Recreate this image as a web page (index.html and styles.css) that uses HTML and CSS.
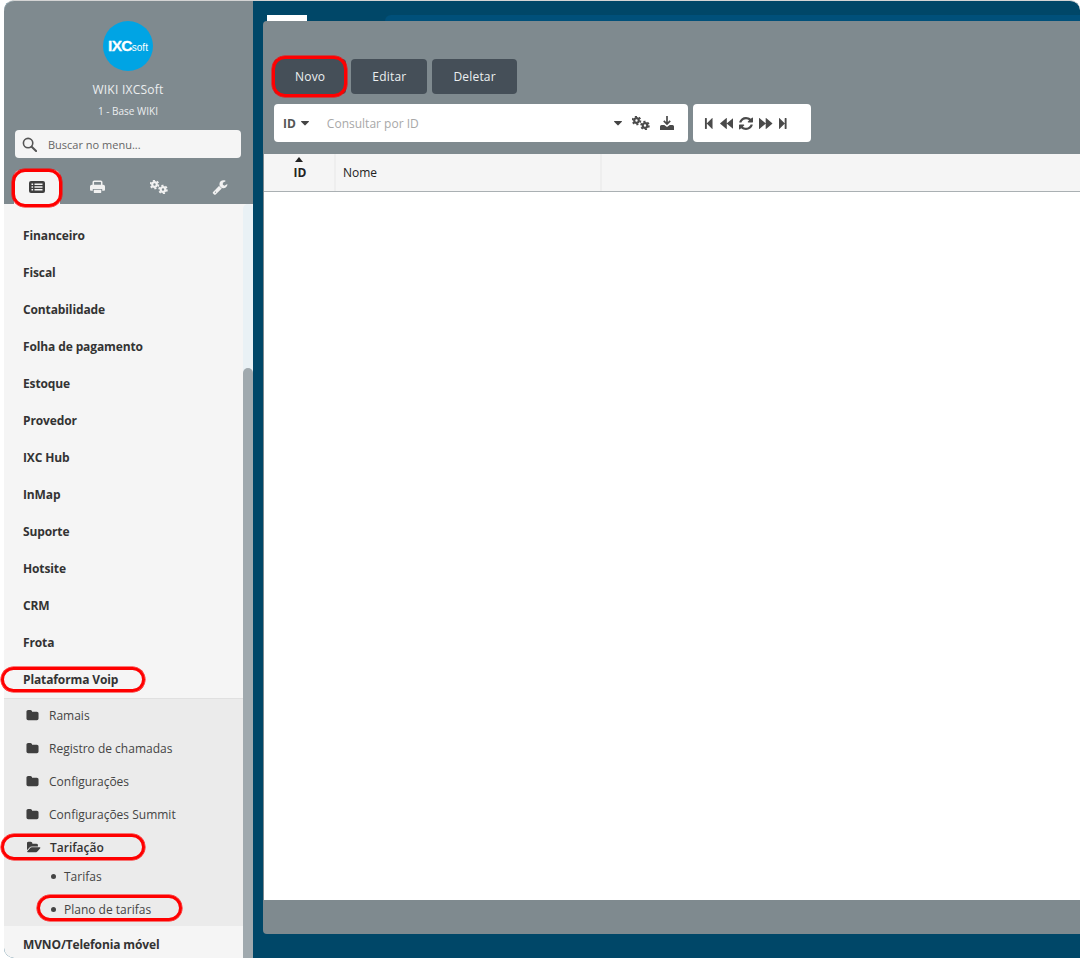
FILE: index.html
```html
<!DOCTYPE html>
<html lang="pt-BR">
<head>
<meta charset="utf-8">
<title>WIKI IXCSoft</title>
<link rel="stylesheet" href="styles.css">
</head>
<body>
<svg class="sprite" aria-hidden="true">
  <symbol id="i-folder" viewBox="0 0 1792 1792"><path d="M1728 608v704q0 92-66 158t-158 66h-1216q-92 0-158-66t-66-158v-960q0-92 66-158t158-66h320q92 0 158 66t66 158v32h672q92 0 158 66t66 158z"/></symbol>
  <symbol id="i-caret" viewBox="0 0 1792 1792"><path d="M1408 704q0 26-19 45l-448 448q-19 19-45 19t-45-19l-448-448q-19-19-19-45t19-45 45-19h896q26 0 45 19t19 45z"/></symbol>
  <symbol id="i-gears" viewBox="0 0 18 14">
    <circle cx="4.500" cy="4.500" r="2.300" fill="none" stroke="currentColor" stroke-width="2.200"/>
    <circle cx="4.500" cy="4.500" r="3.900" fill="none" stroke="currentColor" stroke-width="1.800" stroke-dasharray="2.100 1.980"/>
    <circle cx="13" cy="9.500" r="2.300" fill="none" stroke="currentColor" stroke-width="2.200"/>
    <circle cx="13" cy="9.500" r="3.900" fill="none" stroke="currentColor" stroke-width="1.800" stroke-dasharray="2.100 1.980"/>
  </symbol>
</svg>
<div class="app">
  <aside class="sidebar">
    <header class="side-head">
      <div class="logo"><span class="logo-ixc">IXC</span><span class="logo-soft">soft</span></div>
      <div class="org">WIKI IXCSoft</div>
      <div class="base">1 - Base WIKI</div>
      <label class="side-search">
        <svg class="search-icon" viewBox="0 0 16 16"><circle cx="6.500" cy="6.500" r="5" fill="none" stroke="currentColor" stroke-width="1.700"/><path d="M10.300 10.300 15 15" stroke="currentColor" stroke-width="2.200" stroke-linecap="round"/></svg>
        <input class="side-input" type="text" placeholder="Buscar no menu...">
      </label>
      <nav class="tabs">
        <div class="tab tab-active">
          <svg class="ico-list" viewBox="0 0 16 12"><rect width="16" height="12" rx="2" fill="#3f3f3f"/><path d="M2.500 2.500h1.600v1.600H2.500zM2.500 5.200h1.600v1.600H2.500zM2.500 7.900h1.600v1.600H2.500zM5.500 2.500h8v1.600h-8zM5.500 5.200h8v1.600h-8zM5.500 7.900h8v1.600h-8z" fill="#f5f5f5"/></svg>
          <span class="mark mark-tab"></span>
        </div>
        <div class="tab tab-print">
          <svg class="ico-print" viewBox="0 0 16 14"><path d="M3.500 5V1.800A1 1 0 0 1 4.500.8h7a1 1 0 0 1 1 1V5" fill="none" stroke="#f1f1f1" stroke-width="1.600"/><path d="M2 4.500h12a2 2 0 0 1 2 2V10a1 1 0 0 1-1 1h-2V9H3v2H1a1 1 0 0 1-1-1V6.500a2 2 0 0 1 2-2z" fill="#f1f1f1"/><path d="M4 10h8v2.500a1 1 0 0 1-1 1H5a1 1 0 0 1-1-1z" fill="#f1f1f1"/></svg>
        </div>
        <div class="tab tab-gears"><svg class="ico-gears"><use href="#i-gears"/></svg></div>
        <div class="tab">
          <svg class="ico-wrench" viewBox="0 0 1792 1792"><path d="M448 1472q0-26-19-45t-45-19-45 19-19 45 19 45 45 19 45-19 19-45zm644-420l-682 682q-37 37-90 37-52 0-91-37l-106-108q-38-36-38-90 0-53 38-91l681-681q39 98 114.500 173.500t173.500 114.500zm634-435q0 39-23 106-47 134-164.500 217.500t-258.500 83.500q-185 0-316.500-131.500t-131.500-316.500 131.500-316.500 316.500-131.500q58 0 121.500 16.500t107.500 46.500q16 11 16 28t-16 28l-293 169v224l193 111q5-3 79-48.500t135.500-81 70.500-35.500q15 0 23.500 10t8.500 25z"/></svg>
        </div>
      </nav>
    </header>
    <div class="side-body">
      <ul class="menu">
        <li class="menu-item">Financeiro</li>
        <li class="menu-item">Fiscal</li>
        <li class="menu-item">Contabilidade</li>
        <li class="menu-item">Folha de pagamento</li>
        <li class="menu-item">Estoque</li>
        <li class="menu-item">Provedor</li>
        <li class="menu-item">IXC Hub</li>
        <li class="menu-item">InMap</li>
        <li class="menu-item">Suporte</li>
        <li class="menu-item">Hotsite</li>
        <li class="menu-item">CRM</li>
        <li class="menu-item">Frota</li>
        <li class="menu-item menu-open">Plataforma Voip<span class="mark mark-voip"></span></li>
        <li class="sub">
          <div class="sub-item"><svg class="ico-folder"><use href="#i-folder"/></svg>Ramais</div>
          <div class="sub-item"><svg class="ico-folder"><use href="#i-folder"/></svg>Registro de chamadas</div>
          <div class="sub-item"><svg class="ico-folder"><use href="#i-folder"/></svg>Configurações</div>
          <div class="sub-item"><svg class="ico-folder"><use href="#i-folder"/></svg>Configurações Summit</div>
          <div class="sub-item sub-open">
            <svg class="ico-open" viewBox="0 0 1920 1792"><path d="M1845 931q0 35-53 92l-336 396q-43 51-120.500 86.500t-143.500 35.500h-1088q-34 0-60.500-13t-26.500-43q0-35 53-92l336-396q43-51 120.500-86.500t143.500-35.500h1088q34 0 60.500 13t26.500 43zm-343-344v160h-832q-94 0-197 47.500t-164 119.500l-337 396-5 6q0-4-.5-12.500t-.5-12.500v-960q0-92 66-158t158-66h320q92 0 158 66t66 158v32h544q92 0 158 66t66 158z"/></svg>Tarifação<span class="mark mark-tar"></span>
          </div>
          <div class="leaf-list">
            <div class="leaf"><i class="dot"></i>Tarifas</div>
            <div class="leaf"><i class="dot"></i>Plano de tarifas<span class="mark mark-plano"></span></div>
          </div>
        </li>
        <li class="menu-item">MVNO/Telefonia móvel</li>
      </ul>
      <div class="scroll-track"><div class="scroll-thumb"></div></div>
    </div>
  </aside>
  <main class="main">
    <div class="strip">
      <div class="strip-tab"></div>
      <div class="strip-bar"></div>
    </div>
    <section class="panel">
      <div class="toolbar">
        <div class="actions">
          <button class="btn" type="button">Novo<span class="mark mark-novo"></span></button>
          <button class="btn" type="button">Editar</button>
          <button class="btn" type="button">Deletar</button>
        </div>
        <div class="filters">
          <div class="searchbox">
            <span class="field">ID</span>
            <svg class="ico-caret"><use href="#i-caret"/></svg>
            <input class="query" type="text" placeholder="Consultar por ID">
            <svg class="ico-caret ico-caret-r"><use href="#i-caret"/></svg>
            <svg class="ico-gears-s"><use href="#i-gears"/></svg>
            <svg class="ico-dl" viewBox="0 0 14 14"><path d="M7 0v7.500M3.800 4.800 7 8l3.200-3.200" fill="none" stroke="currentColor" stroke-width="1.700"/><path d="M1.500 9h2.800L7 11l2.700-2h2.800a1.500 1.500 0 0 1 1.500 1.500V14H0v-3.500A1.500 1.500 0 0 1 1.500 9z"/></svg>
          </div>
          <div class="pager">
            <svg class="pg pg-s" viewBox="256 128 1216 1536" preserveAspectRatio="none"><path d="M1363 141q19-19 32-13t13 32v1472q0 26-13 32t-32-13l-710-710q-9-9-13-19v678q0 26-19 45t-45 19h-128q-26 0-45-19t-19-45v-1408q0-26 19-45t45-19h128q26 0 45 19t19 45v678q4-10 13-19z"/></svg>
            <svg class="pg pg-d" viewBox="64 128 1664 1536" preserveAspectRatio="none"><path d="M1683 141q19-19 32-13t13 32v1472q0 26-13 32t-32-13l-710-710q-9-9-13-19v710q0 26-13 32t-32-13l-710-710q-19-19-19-45t19-45l710-710q19-19 32-13t13 32v710q4-10 13-19z"/></svg>
            <svg class="pg pg-r" viewBox="128 128 1536 1536" preserveAspectRatio="none"><path d="M1639 1056q0 5-1 7-64 268-268 434.500t-478 166.500q-146 0-282.500-55t-243.500-157l-129 129q-19 19-45 19t-45-19-19-45v-448q0-26 19-45t45-19h448q26 0 45 19t19 45-19 45l-137 137q71 66 161 102t187 36q134 0 250-65t186-179q11-17 53-117 8-23 30-23h192q13 0 22.500 9.500t9.500 22.500zm25-800v448q0 26-19 45t-45 19h-448q-26 0-45-19t-19-45 19-45l138-138q-148-137-349-137-134 0-250 65t-186 179q-11 17-53 117-8 23-30 23h-199q-13 0-22.500-9.500t-9.500-22.500v-7q65-268 270-434.500t480-166.500q146 0 284 55.500t245 156.500l130-129q19-19 45-19t45 19 19 45z"/></svg>
            <svg class="pg pg-d" viewBox="64 128 1664 1536" preserveAspectRatio="none"><path d="M109 1651q-19 19-32 13t-13-32v-1472q0-26 13-32t32 13l710 710q9 9 13 19v-710q0-26 13-32t32 13l710 710q19 19 19 45t-19 45l-710 710q-19 19-32 13t-13-32v-710q-4 10-13 19z"/></svg>
            <svg class="pg pg-s" viewBox="384 128 1216 1536" preserveAspectRatio="none"><path d="M429 1651q-19 19-32 13t-13-32v-1472q0-26 13-32t32 13l710 710q9 9 13 19v-678q0-26 19-45t45-19h128q26 0 45 19t19 45v1408q0 26-19 45t-45 19h-128q-26 0-45-19t-19-45v-678q-4 10-13 19z"/></svg>
          </div>
        </div>
      </div>
      <div class="grid">
        <div class="grid-head">
          <div class="col col-id"><span class="sort-arrow"></span>ID</div>
          <div class="col col-name">Nome</div>
          <div class="col col-rest"></div>
        </div>
        <div class="grid-body"></div>
      </div>
      <div class="panel-foot"></div>
    </section>
  </main>
</div>
</body>
</html>
```
FILE: styles.css
```css
* { box-sizing: border-box; }
html, body { margin: 0; height: 958px; overflow: hidden; background: #fff; }
body { font-family: "Open Sans", "Noto Sans", sans-serif; font-size: 12px; color: #333; }
.sprite { display: none; }
ul { list-style: none; margin: 0; padding: 0; }

.app {
  height: 958px;
  display: flex;
  margin-left: 4px;
  border-top: 1px solid #d4d4d4;
  background: #004768;
  border-radius: 10px 10px 0 10px;
}

.mark {
  position: absolute;
  border: 3px solid #f00;
  box-shadow: 0 0 .5px .5px #f00;
  pointer-events: none;
}

/* Sidebar */
.sidebar { width: 249px; flex: none; display: flex; flex-direction: column; background: #f5f5f5; border-radius: 10px 0 0 10px; }
.side-head {
  height: 203px;
  flex: none;
  background: #7f8a8f;
  border-radius: 10px 0 0 0;
  display: flex;
  flex-direction: column;
  align-items: center;
  padding: 20px 1px 0 0;
}
.logo {
  width: 50px; height: 50px;
  border-radius: 50%;
  background: #00a4e4;
  color: #fff;
  display: flex;
  align-items: center;
  justify-content: center;
  font-family: "Liberation Sans", sans-serif;
}
.logo-ixc { font-size: 15.5px; font-weight: 700; letter-spacing: -.7px; -webkit-text-stroke: .3px #fff; }
.logo-soft { font-size: 10px; margin: 3px 0 0 0; }
.org { margin-top: 11px; line-height: 16px; font-size: 12px; letter-spacing: .25px; color: #eceeef; }
.base { margin-top: 6px; line-height: 14px; font-size: 10px; color: #eceeef; }
.side-search {
  align-self: flex-start;
  margin: 12px 0 0 11px;
  width: 226px; height: 28px;
  background: #f5f5f5;
  border-radius: 4px;
  display: flex;
  align-items: center;
  padding-left: 7px;
  color: #555;
}
.search-icon { width: 15px; height: 15px; flex: none; }
.side-input {
  flex: 1; min-width: 0;
  margin-left: 11px; padding: 0;
  border: 0; outline: 0; background: transparent;
  font: 11px "Open Sans", sans-serif;
  color: #555;
}
.side-input::placeholder { color: #666; opacity: 1; }
.tabs { align-self: flex-start; margin: 12px 0 0 10px; display: flex; gap: 15px; height: 34px; }
.tab { width: 46px; position: relative; display: flex; align-items: center; justify-content: center; padding-bottom: 1px; }
.tab-print { padding-right: 2px; }
.tab-gears { padding-right: 1px; }
.tab-active { background: #f5f5f5; border-radius: 6px 6px 0 0; }
.mark-tab { left: -2px; top: -1px; width: 50px; height: 38px; border-radius: 13px; }
.ico-list { width: 16px; height: 12px; }
.ico-print { width: 15px; height: 14px; }
.ico-gears { width: 18px; height: 14px; color: #f1f1f1; }
.ico-wrench { width: 16px; height: 16px; fill: #f1f1f1; }

.side-body { flex: 1; min-height: 0; display: flex; border-radius: 0 0 0 10px; }
.menu { flex: 1; min-width: 0; padding-top: 13px; }
.menu-item {
  height: 37px;
  padding-left: 19px;
  display: flex;
  align-items: center;
  font-weight: 700;
  letter-spacing: -.12px;
  color: #333;
  position: relative;
}
.menu-open { height: 38px; padding-bottom: 1px; border-bottom: 1px solid #e0e0e0; }
.mark-voip { left: -3px; top: 6px; width: 144px; height: 25px; border-radius: 13px; }
.sub { background: #ebebeb; }
.sub-item {
  height: 33px;
  display: flex;
  align-items: center;
  padding-left: 22px;
  color: #444;
  position: relative;
}
.ico-folder { width: 13px; height: 13px; margin-right: 10px; fill: #3f3f3f; flex: none; }
.sub-open { color: #333; font-weight: 600; }
.ico-open { width: 14px; height: 13px; margin: 0 9px 0 1px; fill: #3f3f3f; flex: none; }
.mark-tar { left: -3px; top: 3px; width: 144px; height: 26px; border-radius: 13px; }
.leaf-list { margin-top: -4px; }
.leaf {
  height: 33px;
  display: flex;
  align-items: center;
  padding-left: 47px;
  color: #444;
  position: relative;
}
.dot { width: 5px; height: 5px; border-radius: 50%; background: #444; margin-right: 8px; flex: none; }
.mark-plano { left: 33px; top: 2px; width: 145px; height: 26px; border-radius: 13px; }
.scroll-track { width: 10px; flex: none; background: #e9f1f5; border-radius: 5px 5px 0 0; padding-top: 164px; }
.scroll-thumb { height: 590px; background: #a0a9ae; border-radius: 5px 5px 0 0; }

/* Main */
.main { flex: 1; min-width: 0; display: flex; flex-direction: column; padding: 14px 0 24px 10px; }
.strip { height: 6px; flex: none; display: flex; }
.strip-tab { width: 40px; margin-left: 4px; background: #fff; }
.strip-bar { flex: 1; margin-left: 78px; background: #00507a; border-radius: 10px 0 0 0; }
.panel { flex: 1; min-height: 0; display: flex; flex-direction: column; background: #7f8a8f; border-radius: 4px 0 0 4px; }
.toolbar { flex: none; height: 133px; padding: 38px 0 0 11px; }
.actions { display: flex; gap: 5px; }
.btn {
  position: relative;
  height: 35px;
  padding: 0 21px;
  border: 0;
  border-radius: 4px;
  background: #454f58;
  color: #eceff1;
  font: 12px "Open Sans", sans-serif;
  letter-spacing: .2px;
}
.mark-novo { left: -2px; top: -3px; width: 75px; height: 41px; border-radius: 13px; }
.filters { display: flex; gap: 5px; margin-top: 10px; }
.searchbox, .pager {
  height: 38px;
  background: #fff;
  border-radius: 4px;
  display: flex;
  align-items: center;
  color: #4a4a4a;
}
.searchbox { width: 414px; padding-left: 9px; }
.field { font-weight: 700; color: #555; }
.ico-caret { width: 14px; height: 14px; margin-left: 2px; fill: #444; flex: none; }
.query {
  flex: 1; min-width: 0;
  margin-left: 15px; padding: 0;
  border: 0; outline: 0; background: transparent;
  font: 12px "Open Sans", sans-serif;
}
.query::placeholder { color: #a8a8a8; opacity: 1; }
.ico-caret-r { margin-left: 0; }
.ico-gears-s { width: 18px; height: 14px; margin-left: 7px; color: #4a4a4a; }
.ico-dl { width: 14px; height: 14px; margin: 0 14px 0 10px; fill: currentColor; }
.pager { width: 118px; padding-left: 11px; gap: 5.7px; }
.pg { height: 11px; fill: #4a4a4a; flex: none; }
.pg-s { width: 9px; }
.pg-d { width: 14.500px; }
.pg-r { width: 14px; height: 13px; }

.grid { flex: 1; min-height: 0; margin-left: 1px; display: flex; flex-direction: column; background: #fff; }
.grid-head { height: 38px; flex: none; display: flex; background: #f5f5f5; border-bottom: 1px solid #aab0b3; font-size: 12px; color: #222; }
.col { display: flex; align-items: center; border-right: 2px solid #eee; }
.col-id { width: 72px; justify-content: center; position: relative; font-weight: 700; padding-left: 2px; }
.col-name { width: 266px; padding-left: 7px; }
.col-rest { flex: 1; border-right: 0; }
.sort-arrow {
  position: absolute;
  left: 31px; top: 3px;
  border-left: 4px solid transparent;
  border-right: 4px solid transparent;
  border-bottom: 5px solid #222;
}
.grid-body { flex: 1; }
.panel-foot { height: 34px; flex: none; }
```
